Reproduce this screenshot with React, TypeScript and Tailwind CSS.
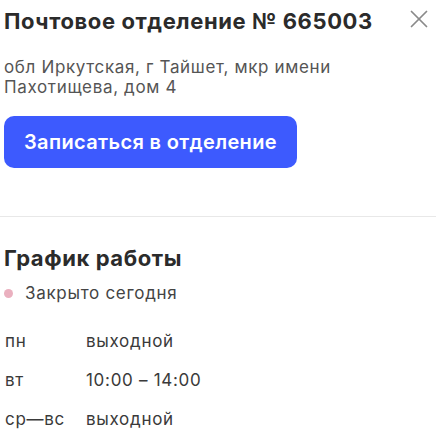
import { X } from "lucide-react"

const SCHEDULE = [
  { day: "пн", hours: "выходной" },
  { day: "вт", hours: "10:00 – 14:00" },
  { day: "ср—вс", hours: "выходной" },
]

export default function App() {
  return (
    <div
      className="w-[436px] h-[434px] overflow-hidden bg-white text-[#2b2b2b]"
      style={{ fontFamily: "Inter, 'Noto Sans', sans-serif" }}
    >
      <div className="pl-1 pr-[2px] pt-[7px]">
        <div className="flex items-start justify-between">
          <h1 className="text-[22px] leading-[28px] font-bold tracking-[0.6px]">
            Почтовое отделение № 665003
          </h1>
          <button className="-mt-[3px] text-[#8a8a8a]">
            <X
              className="h-[30px] w-[30px]"
              strokeWidth={1.4}
            />
          </button>
        </div>
        <p className="mt-[22px] text-[17px] leading-[20px] tracking-[0.65px] text-[#555]">
          обл Иркутская, г Тайшет, мкр имени
          <br />
          Пахотищева, дом 4
        </p>
        <button className="mt-[19px] flex h-[52px] w-[293px] items-center justify-center rounded-[10px] bg-[#3d5afe] text-[20px] font-semibold tracking-[0.35px] text-white">
          Записаться в отделение
        </button>
      </div>
      <div className="mt-[48px] h-px bg-[#e8e8e8]" />
      <div className="pl-1 pt-[29px]">
        <h2 className="text-[22px] leading-[24px] font-bold tracking-[0.6px]">
          График работы
        </h2>
        <div className="mt-[13px] flex items-center gap-[12px] text-[17px] leading-[20px] tracking-[0.7px] text-[#444]">
          <span className="h-[9px] w-[9px] rounded-full bg-[#eab0bf]" />
          Закрыто сегодня
        </div>
        <div className="mt-[28px] flex flex-col gap-[19px] text-[17px] leading-[20px] tracking-[0.7px] text-[#3a3a3a]">
          {SCHEDULE.map((row) => (
            <div
              key={row.day}
              className="flex"
            >
              <span className="w-[82px] pl-px">{row.day}</span>
              <span>{row.hours}</span>
            </div>
          ))}
        </div>
      </div>
    </div>
  )
}
